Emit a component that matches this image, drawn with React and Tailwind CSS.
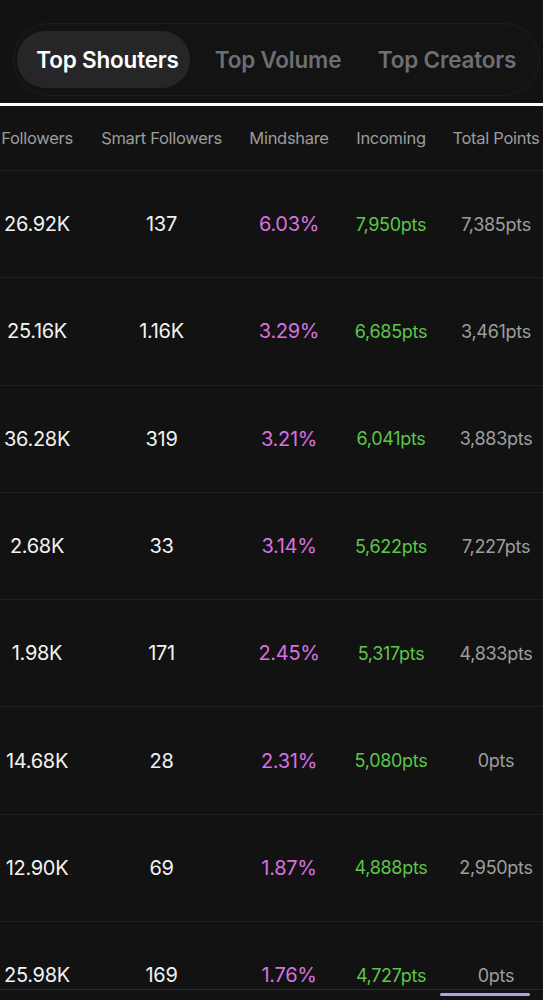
import React from 'react';

const tabs = [
  { label: 'Top Shouters', pad: 'pl-[8px]' },
  { label: 'Top Volume', pad: 'pl-[3px]' },
  { label: 'Top Creators', pad: 'pr-[5px]' },
];

const columns = ['Followers', 'Smart Followers', 'Mindshare', 'Incoming', 'Total Points'];

const rows = [
  ['26.92K', '137', '6.03%', '7,950pts', '7,385pts'],
  ['25.16K', '1.16K', '3.29%', '6,685pts', '3,461pts'],
  ['36.28K', '319', '3.21%', '6,041pts', '3,883pts'],
  ['2.68K', '33', '3.14%', '5,622pts', '7,227pts'],
  ['1.98K', '171', '2.45%', '5,317pts', '4,833pts'],
  ['14.68K', '28', '2.31%', '5,080pts', '0pts'],
  ['12.90K', '69', '1.87%', '4,888pts', '2,950pts'],
  ['25.98K', '169', '1.76%', '4,727pts', '0pts'],
];

// first column is partly scrolled out of view
const grid = 'grid grid-cols-[100px_149px_106px_98px_112px] ml-[-13px]';

export default function App() {
  return (
    <div className="h-screen flex flex-col bg-[#121212] font-['Inter',sans-serif] overflow-hidden">
      {/* Tabs */}
      <div className="pt-[23px] pl-[13px] pr-[3px]">
        <div className="grid grid-cols-3 h-[73px] p-[7px_3px] rounded-full border border-[#1e1e1e] bg-[#131313]">
          {tabs.map((t, i) => (
            <button
              key={t.label}
              className={`rounded-full text-[22.5px] font-semibold tracking-[-0.2px] pt-[1px] ${t.pad} ${
                i === 0 ? 'bg-[#262628] text-white' : 'text-[#6e6e73]'
              }`}
            >
              {t.label}
            </button>
          ))}
        </div>
      </div>

      <div className="mt-[7px] h-[3px] bg-white" />

      {/* Table */}
      <div className="flex-1 overflow-hidden">
        <div className={`${grid} h-[65px] border-b border-[#222] items-center text-center text-[16.5px] text-[#9c9c9c] whitespace-nowrap tracking-[-0.3px]`}>
          {columns.map(c => (
            <span key={c}>{c}</span>
          ))}
        </div>
        {rows.map((r, i) => (
          <div
            key={i}
            className={`${grid} h-[107.3px] border-b border-[#202020] items-center text-center text-[20px] tracking-[-0.3px] whitespace-nowrap`}
          >
            <span className="text-[#f2f2f2]">{r[0]}</span>
            <span className="text-[#f2f2f2]">{r[1]}</span>
            <span className="text-[#d870e0]">{r[2]}</span>
            <span className="text-[#5cc64a] text-[18px]">{r[3]}</span>
            <span className="text-[#9e9e9e] text-[18px]">{r[4]}</span>
          </div>
        ))}
      </div>

      {/* Scroll indicator */}
      <div className="h-[11px] border-t border-[#2a2a2a]">
        <div className="mt-[3px] ml-[440px] w-[90px] h-[3px] rounded-full bg-[#ada3e6]" />
      </div>
    </div>
  );
}
